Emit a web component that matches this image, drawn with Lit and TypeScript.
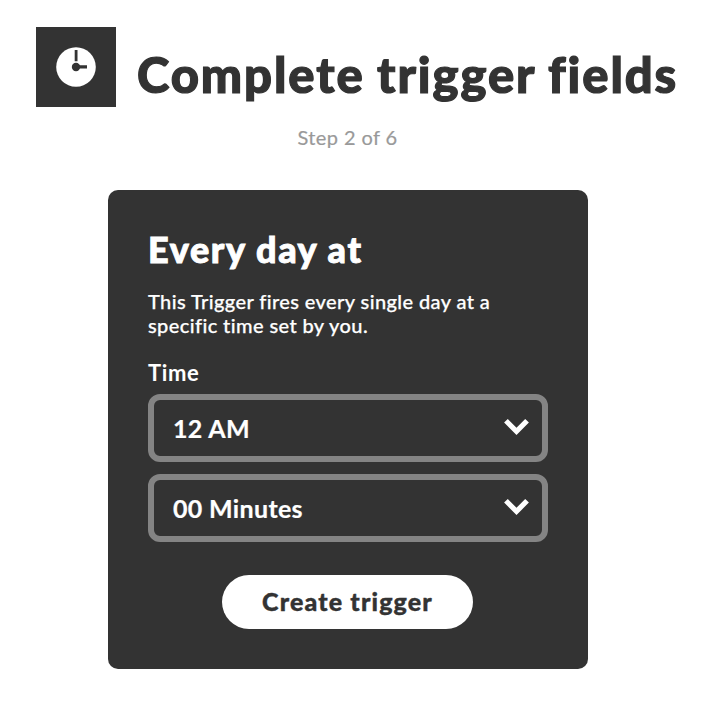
import { LitElement, html, css } from "lit";
import { customElement, property } from "lit/decorators.js";

@customElement("select-field")
class SelectField extends LitElement {
  @property() value = "";

  static styles = css`
    :host {
      display: flex;
      align-items: center;
      justify-content: space-between;
      box-sizing: border-box;
      height: 68px;
      padding: 0 13px 0 19px;
      border: 6px solid #848484;
      border-radius: 12px;
      color: #fff;
      font-size: 25px;
      font-weight: 700;
      letter-spacing: 0.33px;
      line-height: 32px;
      white-space: nowrap;
      -webkit-text-stroke: 0.2px #fff;
    }
    svg {
      display: block;
      margin-bottom: 2px;
    }
    span {
      margin-bottom: 1px;
    }
  `;

  render() {
    return html`
      <span>${this.value}</span>
      <svg width="25" height="16" viewBox="0 0 25 16">
        <path d="M3.8 0 12.5 8.7 21.2 0 24.9 3.6 12.5 16 .1 3.6z" fill="#fff" />
      </svg>
    `;
  }
}

@customElement("app-root")
class AppRoot extends LitElement {
  static styles = css`
    :host {
      display: block;
      box-sizing: border-box;
      height: 702px;
      padding-top: 27px;
      overflow: hidden;
      background: #fff;
      color: #333;
      font-family: Lato, "Open Sans", sans-serif;
    }
    header {
      display: flex;
      height: 80px;
      padding-left: 36px;
      gap: 21px;
    }
    .icon {
      display: block;
      flex: none;
    }
    h1 {
      margin: 17px 0 0;
      font-size: 49px;
      font-weight: 900;
      letter-spacing: 1.9px;
      word-spacing: -1px;
      line-height: 60px;
      white-space: nowrap;
      -webkit-text-stroke: 1.2px #333;
    }
    .step {
      width: 695px;
      margin: 18px 0 0;
      color: #999;
      font-size: 20px;
      letter-spacing: 0.4px;
      line-height: 24px;
      text-align: center;
      -webkit-text-stroke: 0.2px #999;
    }
    .card {
      box-sizing: border-box;
      width: 480px;
      height: 479px;
      margin: 41px 0 0 108px;
      padding: 36px 40px 0;
      border-radius: 10px;
      background: #333;
      color: #fff;
    }
    h2 {
      margin: 0;
      font-size: 36px;
      font-weight: 900;
      letter-spacing: 1.6px;
      line-height: 46px;
      -webkit-text-stroke: 0.9px #fff;
    }
    .about {
      margin: 17px 0 0;
      font-size: 20px;
      font-weight: 500;
      letter-spacing: 0.4px;
      line-height: 24px;
      white-space: nowrap;
      -webkit-text-stroke: 0.25px #fff;
    }
    .label {
      margin: 22px 0 7px;
      font-size: 22px;
      font-weight: 700;
      letter-spacing: 0.6px;
      line-height: 28px;
    }
    .fields {
      display: grid;
      gap: 12px;
    }
    button {
      display: block;
      width: 251px;
      height: 54px;
      margin: 33px 0 0 74px;
      padding: 0 0 2px;
      border: 0;
      border-radius: 27px;
      background: #fff;
      color: #333;
      font: 900 25px/52px Lato, "Open Sans", sans-serif;
      letter-spacing: 1.15px;
      -webkit-text-stroke: 0.4px #333;
    }
  `;

  render() {
    return html`
      <header>
        <svg class="icon" width="80" height="80" viewBox="0 0 80 80">
          <rect width="80" height="80" fill="#333" />
          <circle cx="40" cy="40" r="19.8" fill="#fff" />
          <circle cx="40" cy="40" r="4.2" fill="#333" />
          <path d="M38.7 23h2.8v11.3h-2.8zM43 38.3h8v3.2h-8z" fill="#333" />
        </svg>
        <h1>Complete trigger fields</h1>
      </header>
      <p class="step">Step 2 of 6</p>
      <section class="card">
        <h2>Every day at</h2>
        <p class="about">This Trigger fires every single day at a<br />specific time set by you.</p>
        <div class="label">Time</div>
        <div class="fields">
          <select-field value="12 AM"></select-field>
          <select-field value="00 Minutes"></select-field>
        </div>
        <button>Create trigger</button>
      </section>
    `;
  }
}
